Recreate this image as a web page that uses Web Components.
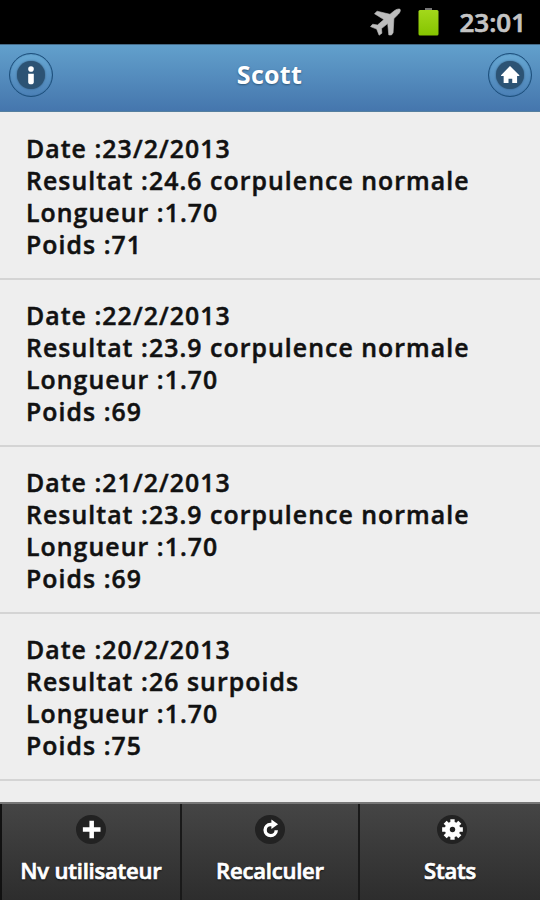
<!DOCTYPE html>
<html lang="fr">
<head>
<meta charset="utf-8">
<title>Scott</title>
<style>
	body {
		margin: 0;
		font-family: 'Open Sans', 'Noto Sans', sans-serif;
	}
</style>
</head>
<body>
<bmi-app>
	<status-bar slot="status">23:01</status-bar>
	<app-header slot="header">
		<round-button slot="left" icon="info"></round-button>
		Scott
		<round-button slot="right" icon="home"></round-button>
	</app-header>
	<bmi-entry date="23/2/2013" result="24.6 corpulence normale" height="1.70" weight="71"></bmi-entry>
	<bmi-entry date="22/2/2013" result="23.9 corpulence normale" height="1.70" weight="69"></bmi-entry>
	<bmi-entry date="21/2/2013" result="23.9 corpulence normale" height="1.70" weight="69"></bmi-entry>
	<bmi-entry date="20/2/2013" result="26 surpoids" height="1.70" weight="75"></bmi-entry>
	<nav-bar slot="footer">
		<nav-button icon="plus">Nv utilisateur</nav-button>
		<nav-button icon="refresh">Recalculer</nav-button>
		<nav-button icon="gear">Stats</nav-button>
	</nav-bar>
</bmi-app>

<script>
const ICONS = {
	info: /*html*/`
		<circle cx="15" cy="8.500" r="3"/>
		<path d="M12 13.600h6v8.800a3 2.600 0 0 1-6 0z"/>`,
	home: /*html*/`
		<path d="M15 5.400 25 15.200V16.200H22.600V23.600H17.400V19H13.400V23.600H8.200V16.200H5.400V15.200z"/>`,
	plus: /*html*/`
		<path d="M12.700 5.200h5v7.300H25v5H17.700V24.800H12.700V17.500H5.400V12.500h7.300z"/>`,
	refresh: /*html*/`
		<path d="M17 9.400H15A6.200 6.200 0 1 0 21.400 15.800" fill="none" stroke="#fff" stroke-width="3.800"/>
		<path d="M16 3.800 23.400 9.300 16 14.500z"/>`,
	gear: /*html*/`
		<path d="M12.600 3.500h4.800v23h-4.800zM3.500 12.600h23v4.800h-23z"/>
		<path d="M12.600 3.500h4.800v23h-4.800zM3.500 12.600h23v4.800h-23z" transform="rotate(45 15 15)"/>
		<circle cx="15" cy="15" r="8.600"/>
		<circle cx="15" cy="15" r="3" fill="#222"/>`
}

const iconSvg = name => /*html*/`<svg viewBox="0 0 30 30" aria-hidden="true">${ICONS[name]}</svg>`

class BmiApp extends HTMLElement {
	constructor() {
		super()
		this.attachShadow({mode:'open'})
		this.shadowRoot.innerHTML = /*html*/`
<style>
	:host {
		display: flex;
		flex-direction: column;
		height: 900px;
		overflow: hidden;
		background: #eee;
	}

	main {
		flex: 1;
		min-height: 0;
		padding-top: 1px;
		overflow: hidden;
	}
</style>
<slot name="status"></slot>
<slot name="header"></slot>
<main><slot></slot></main>
<slot name="footer"></slot>`
	}
}

class StatusBar extends HTMLElement {
	constructor() {
		super()
		this.attachShadow({mode:'open'})
		this.shadowRoot.innerHTML = /*html*/`
<style>
	:host {
		display: flex;
		align-items: center;
		justify-content: flex-end;
		box-sizing: border-box;
		flex: none;
		height: 44px;
		padding-right: 14px;
		background: #000;
		color: #c4c4c4;
		font-size: 26px;
		font-weight: 600;
		line-height: 44px;
		-webkit-text-stroke: 0.7px #c4c4c4;
	}

	.plane {
		width: 32px;
		height: 28px;
		margin-right: 16px;
	}

	.battery {
		width: 22px;
		height: 28px;
		margin-right: 20px;
	}
</style>
<svg class="plane" viewBox="0 0 32 28" fill="#bdbdbd" stroke="#bdbdbd" stroke-width="0.6">
	<path d="M31 1.200C29.400 .6 27 1.400 25 3L21 6.300 8.100 3.200 5.500 5.700 14.900 11.600 8.500 17 3.700 16.200 1.500 18.600 7.700 21.100 10.100 27.200 12.900 25.200 12.500 20.600 18.700 15.600 19.800 27H22.500L24.100 24.800 24.900 10.600 29.500 6C31.100 4.200 31.900 2.200 31 1.200z"/>
</svg>
<svg class="battery" viewBox="0 0 22 28">
	<defs>
		<linearGradient id="charge" x2="0" y2="1">
			<stop offset="0" stop-color="#a3d81b"/>
			<stop offset="1" stop-color="#85c400"/>
		</linearGradient>
	</defs>
	<rect x="8" y="0" width="7" height="3" fill="#777"/>
	<rect x="1.500" y="2" width="20" height="25.500" rx="1.500" fill="url(#charge)"/>
</svg>
<slot></slot>`
	}
}

class AppHeader extends HTMLElement {
	constructor() {
		super()
		this.attachShadow({mode:'open'})
		this.shadowRoot.innerHTML = /*html*/`
<style>
	:host {
		display: flex;
		align-items: center;
		justify-content: space-between;
		box-sizing: border-box;
		flex: none;
		height: 68px;
		padding: 0 8px 7px 9px;
		border-top: 1px solid #456a87;
		border-bottom: 1px solid #557f9f;
		background: linear-gradient(#62a0cc, #4576ad);
		color: #fff;
	}

	h1 {
		margin: 0 2px 2px 0;
		font-size: 25px;
		font-weight: 700;
		letter-spacing: 0.3px;
		line-height: 34px;
		text-shadow: 0 1px 2px #2c5577;
	}
</style>
<slot name="left"></slot>
<h1><slot></slot></h1>
<slot name="right"></slot>`
	}
}

class RoundButton extends HTMLElement {
	constructor() {
		super()
		this.attachShadow({mode:'open'})
		this.shadowRoot.innerHTML = /*html*/`
<style>
	:host {
		display: grid;
		place-items: center;
		box-sizing: border-box;
		width: 44px;
		height: 44px;
		border: 1.5px solid #1c4f7c;
		border-radius: 50%;
		background: linear-gradient(#67a8d3, #4b80b6);
		box-shadow: inset 0 0 1px #1c4f7c;
	}

	.disc {
		display: grid;
		place-items: center;
		width: 28px;
		height: 28px;
		border-radius: 50%;
		background: #2c5374;
		box-shadow: 0 0 2px #2c5374;
	}

	svg {
		width: 28px;
		height: 28px;
		fill: #fff;
	}
</style>
<span class="disc">${iconSvg(this.getAttribute('icon'))}</span>`
	}
}

class BmiEntry extends HTMLElement {
	constructor() {
		super()
		this.attachShadow({mode:'open'})
		this.shadowRoot.innerHTML = /*html*/`
<style>
	:host {
		display: block;
		box-sizing: border-box;
		height: 167px;
		padding: 19px 26px 0;
		border-bottom: 2px solid #d4d4d4;
		color: #111;
		font-size: 24.800px;
		font-weight: 600;
		letter-spacing: 1.080px;
		line-height: 32px;
		white-space: nowrap;
		-webkit-text-stroke: 0.5px #111;
	}
</style>
<div>Date :${this.getAttribute('date')}</div>
<div>Resultat :${this.getAttribute('result')}</div>
<div>Longueur :${this.getAttribute('height')}</div>
<div>Poids :${this.getAttribute('weight')}</div>`
	}
}

class NavBar extends HTMLElement {
	constructor() {
		super()
		this.attachShadow({mode:'open'})
		this.shadowRoot.innerHTML = /*html*/`
<style>
	:host {
		display: grid;
		grid-template-columns: 180px 178px 1fr;
		box-sizing: border-box;
		flex: none;
		height: 98px;
		padding-left: 2px;
		border-top: 2px solid #777;
		background: #111;
	}
</style>
<slot></slot>`
	}
}

class NavButton extends HTMLElement {
	constructor() {
		super()
		this.attachShadow({mode:'open'})
		this.shadowRoot.innerHTML = /*html*/`
<style>
	:host {
		display: flex;
		flex-direction: column;
		align-items: center;
		box-sizing: border-box;
		padding-top: 11px;
		border-right: 2px solid #191919;
		background: linear-gradient(#454545, #2d2d2d);
		color: #fff;
		font-size: 22px;
		font-weight: 600;
		letter-spacing: -0.200px;
		line-height: 30px;
		text-shadow: 0 1px 2px #000;
		white-space: nowrap;
		-webkit-text-stroke: 0.7px #fff;
	}

	:host(:last-child) {
		border-right: 0;
	}

	.disc {
		display: grid;
		place-items: center;
		width: 30px;
		height: 29px;
		margin-bottom: 11px;
		border-radius: 50%;
		background: #222;
	}

	svg {
		width: 27px;
		height: 27px;
		fill: #fff;
	}

	:host([icon="gear"]) .disc {
		margin-left: 4px;
	}
</style>
<span class="disc">${iconSvg(this.getAttribute('icon'))}</span>
<span><slot></slot></span>`
	}
}

customElements.define('bmi-app', BmiApp)
customElements.define('status-bar', StatusBar)
customElements.define('app-header', AppHeader)
customElements.define('round-button', RoundButton)
customElements.define('bmi-entry', BmiEntry)
customElements.define('nav-bar', NavBar)
customElements.define('nav-button', NavButton)
</script>
</body>
</html>
